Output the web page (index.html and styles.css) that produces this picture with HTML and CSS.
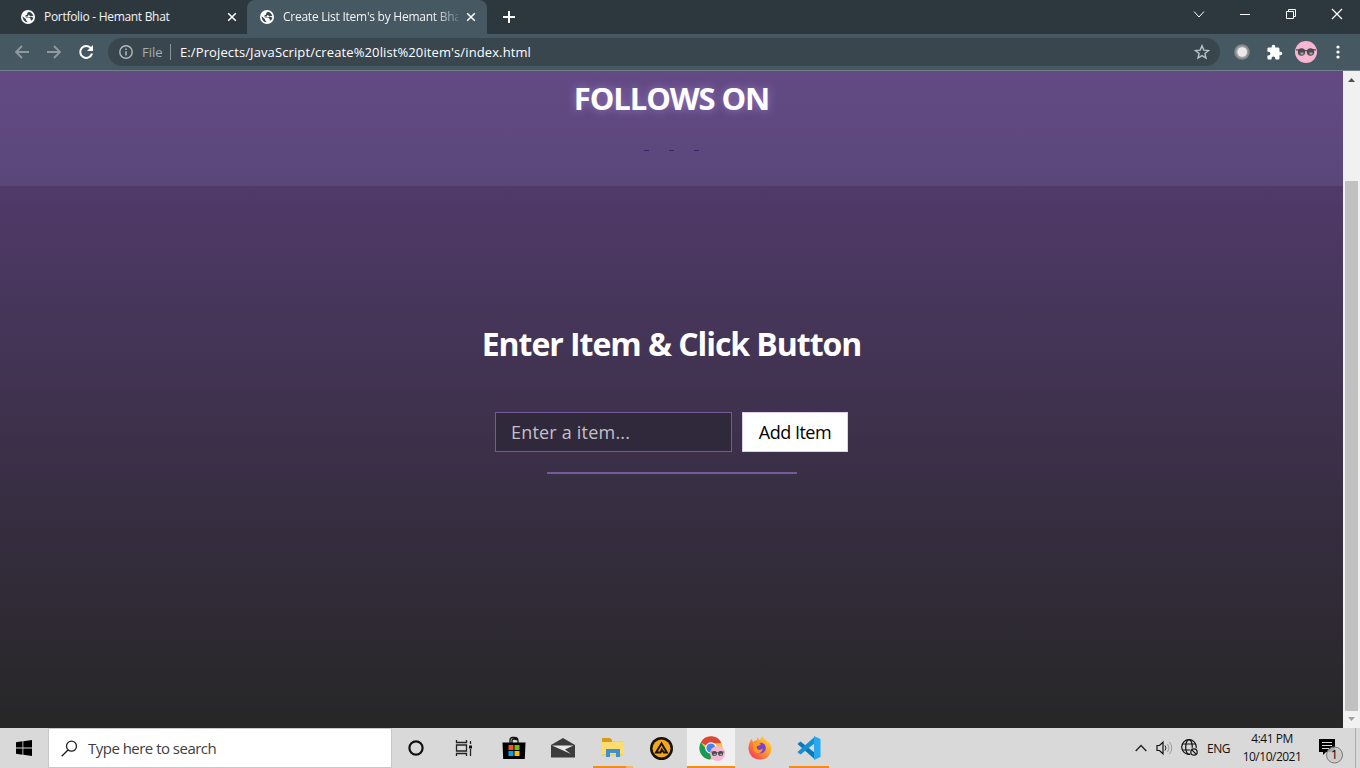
FILE: index.html
```html
<!DOCTYPE html>
<html lang="en">
<head>
<meta charset="utf-8">
<title>Create List Item's by Hemant Bhat</title>
<link rel="stylesheet" href="styles.css">
</head>
<body>
<svg width="0" height="0" class="defs">
  <symbol id="globe" viewBox="0 0 14 14"><circle cx="7" cy="7" r="7" fill="#fff"/><path d="M7.500 1.600 6 3.200v1.600H4.400v1.800h3.200l1.500 1.700h2.900c-.5 1.800-1.800 3.200-3.500 3.800L7.600 11.500V9.800H5.800L1.700 6.300A5.400 5.400 0 0 0 5.700 12.300V10.800L4.500 9.300M9.300 2.100v1.400L8.200 4.700l1.200 1.200h2.600" fill="none" stroke="#35444c" stroke-width="0"/><path d="M1.700 6.200 5 9.300v1l1.300 1.200v.8A5.300 5.300 0 0 1 1.700 6.200ZM7.800 1.700A5.400 5.400 0 0 1 12.200 6L9.300 6.300 8.200 5.200H7v1.300H5v1.200h3.800l.9 1.200v1.400l1 .3A5.500 5.500 0 0 0 12.300 7.500L9.700 6.800 8 7.200H4.600L4.400 5.500 6.200 4.600V3.200Z" fill="#35444c"/></symbol>
  <symbol id="close" viewBox="0 0 10 10"><path d="m1.200 1.200 7.600 7.600m0-7.600L1.200 8.800" stroke="#fff" stroke-width="1.500"/></symbol>
  <symbol id="avatar" viewBox="0 0 22 22"><circle cx="11" cy="11" r="11" fill="#f7b7d2"/><path d="M1 9q4.500-1.300 10 .8 5.500-2.100 10-.8" fill="none" stroke="#3a3036" stroke-width="1"/><circle cx="6.500" cy="11" r="3.700" fill="#4b4c50"/><circle cx="15.500" cy="11" r="3.700" fill="#4b4c50"/><path d="M5.500 12.500h3m6 0h3" stroke="#a9aaad" stroke-width="2"/></symbol>
</svg>
<div class="screen">
  <header class="tabs">
    <div class="tab">
      <svg class="favicon"><use href="#globe"/></svg>
      <span class="tab-title t1">Portfolio - Hemant Bhat</span>
      <svg class="tab-close"><use href="#close"/></svg>
    </div>
    <div class="tab active">
      <svg class="favicon"><use href="#globe"/></svg>
      <span class="tab-title t2">Create List Item's by Hemant Bha</span>
      <svg class="tab-close"><use href="#close"/></svg>
    </div>
    <svg class="new-tab" viewBox="0 0 12 12"><path d="M6 0v12M0 6h12" stroke="#fff" stroke-width="2"/></svg>
    <div class="window-controls">
      <svg width="46" height="28" viewBox="0 0 46 28"><path d="m18 11.500 5 5.500 5-5.500"/></svg>
      <svg width="46" height="28" viewBox="0 0 46 28"><path d="M18 14.500h10"/></svg>
      <svg width="46" height="28" viewBox="0 0 46 28"><path d="M18.500 11.500h7v7h-7zM20.500 11.500v-2h7v7h-2"/></svg>
      <svg width="46" height="28" viewBox="0 0 46 28"><path d="m18 9 10 10m0-10L18 19" stroke-width="1.300"/></svg>
    </div>
  </header>

  <nav class="toolbar">
    <svg class="nav-icon" viewBox="0 0 16 16"><path d="M15 8H2m6-6L2 8l6 6" fill="none" stroke="#8e9aa0" stroke-width="1.800"/></svg>
    <svg class="nav-icon" viewBox="0 0 16 16"><path d="M1 8h13M8 2l6 6-6 6" fill="none" stroke="#8e9aa0" stroke-width="1.800"/></svg>
    <svg class="nav-icon" viewBox="0 0 16 16"><path d="M13 4.300A6 6 0 1 0 14 9.500" fill="none" stroke="#fff" stroke-width="2"/><path d="M15 1v6H9Z" fill="#fff"/></svg>
    <div class="address">
      <svg width="14" height="14" viewBox="0 0 14 14"><circle cx="7" cy="7" r="6.200" fill="none" stroke="#b1babe" stroke-width="1.400"/><path d="M7 6.200v4.300M7 3.500V5" stroke="#b1babe" stroke-width="1.500"/></svg>
      <span class="scheme">File</span>
      <span class="divider"></span>
      <span class="url">E:/Projects/JavaScript/create%20list%20item's/index.html</span>
      <svg class="star" viewBox="0 0 16 16"><path d="m8 1.800 1.800 4.300 4.700.4-3.600 3 1.100 4.600-4-2.500-4 2.500 1.100-4.600-3.600-3 4.700-.4Z" fill="none" stroke="#bac3c7" stroke-width="1.400"/></svg>
    </div>
    <svg class="ext" viewBox="0 0 16 16"><circle cx="8" cy="8" r="7.800" fill="#858889"/><circle cx="8" cy="8" r="6" fill="#a8a8a8"/><circle cx="8.200" cy="8" r="4.800" fill="#e9e9e9"/></svg>
    <svg class="puzzle" viewBox="0 0 24 24"><path fill="#fff" d="M20.500 11H19V7c0-1.100-.9-2-2-2h-4V3.500a2.500 2.500 0 0 0-5 0V5H4c-1.100 0-2 .9-2 2v3.800h1.500a2.700 2.700 0 0 1 0 5.400H2V20c0 1.100.9 2 2 2h3.800v-1.500a2.700 2.700 0 0 1 5.400 0V22H17c1.100 0 2-.9 2-2v-4h1.500a2.500 2.500 0 0 0 0-5z"/></svg>
    <svg class="avatar"><use href="#avatar"/></svg>
    <svg class="menu" viewBox="0 0 4 14"><g fill="#fff"><circle cx="2" cy="2" r="1.600"/><circle cx="2" cy="7" r="1.600"/><circle cx="2" cy="12" r="1.600"/></g></svg>
  </nav>

  <div class="viewport">
    <main class="page">
      <section class="follow">
        <h2>FOLLOWS ON</h2>
        <div class="links"><i></i><i></i><i></i></div>
      </section>
      <section class="list-app">
        <h1>Enter Item &amp; Click Button</h1>
        <div class="form">
          <div class="field"><span>Enter a item...</span></div>
          <button class="add"><span>Add Item</span></button>
        </div>
        <div class="rule"></div>
      </section>
    </main>
    <div class="scrollbar">
      <svg width="17" height="17" viewBox="0 0 17 17"><path d="M5 11h7L8.500 7Z" fill="#505050"/></svg>
      <div class="thumb"></div>
      <svg width="17" height="17" viewBox="0 0 17 17"><path d="M5 6h7l-3.500 4Z" fill="#a3a3a3"/></svg>
    </div>
  </div>

  <footer class="taskbar">
    <div class="start"><svg width="16" height="16" viewBox="0 0 16 16"><path d="M0 2.200 6.500 1.300v6.200H0ZM7.300 1.200 16 0v7.500H7.300ZM0 8.400h6.500v6.300L0 13.800ZM7.300 8.400H16V16l-8.700-1.200Z"/></svg></div>
    <div class="search">
      <svg width="17" height="17" viewBox="0 0 17 17"><circle cx="10.500" cy="6.200" r="5" fill="none" stroke="#222" stroke-width="1.300"/><path d="m7 10-6.300 6.300" stroke="#222" stroke-width="1.400"/></svg>
      <span>Type here to search</span>
    </div>
    <div class="apps">
      <div class="app"><svg width="16" height="16" viewBox="0 0 16 16"><circle cx="8" cy="8" r="6.600" fill="none" stroke="#111" stroke-width="2.200"/></svg></div>
      <div class="app"><svg width="18" height="16" viewBox="0 0 18 16"><path d="M1.500 0v2.500h10V0M1.500 16v-2.500h10V16M1.500 5h10v6h-10zM15.500 1v3m0 5v7" fill="none" stroke="#222" stroke-width="1.300"/><path d="M14 5.500h3v3h-3z" fill="#111"/></svg></div>
      <div class="app wide store"><svg width="24" height="24" viewBox="0 0 24 24"><path d="M8 7V4q0-2.500 2.500-2.500h2Q16 1.500 16 5v2M10 7V5q0-2 2-2t3 1" fill="none" stroke="#111" stroke-width="1.300"/><path d="M.5 6.500h23L22.800 23H1.200Z"/><path d="M6.500 9h5v5h-5z" fill="#f25022"/><path d="M12.500 9h5v5h-5z" fill="#7fba00"/><path d="M6.500 15h5v5h-5z" fill="#00a4ef"/><path d="M12.500 15h5v5h-5z" fill="#ffb900"/></svg></div>
      <div class="app wide"><svg width="24" height="20" viewBox="0 0 24 20"><path d="M0 7 12 0l12 7v12.500H0Z" fill="#3c3c3c"/><path d="M1 7.500h21.500l-8.500 4 6 4.500Z" fill="#e8e8e8"/></svg></div>
      <div class="app wide explorer"><svg width="24" height="22" viewBox="0 0 24 22"><path d="M1 2h8l2 2h11v15H1Z" fill="#f9cf59"/><path d="M1 1h8l2 2v2H1Z" fill="#d69b18"/><path d="M1 5h21v12H1Z" fill="#ffdc70"/><path d="M5 12h14v8h-4v-4H9v4H5Z" fill="#3c92cf"/></svg></div>
      <div class="app wide"><svg width="23" height="23" viewBox="0 0 23 23"><circle cx="11.500" cy="11.500" r="11.500" fill="#17130a"/><circle cx="11.500" cy="11.500" r="9" fill="#f5a61c"/><path d="M11.500 6.500 6 15.500h4.500l1.300-3 2 3h3Z" fill="none" stroke="#17130a" stroke-width="2"/></svg></div>
      <div class="app wide chrome"><svg width="27" height="27" viewBox="0 0 27 27"><circle cx="12" cy="12" r="11.500" fill="#f7c633"/><path d="M12 12 1.800 6.500A11.500 11.500 0 0 1 22.500 7.200H12Z" fill="#db4739"/><path d="M1.800 6.500A11.500 11.500 0 0 0 11 23.500l5-9-8-.5Z" fill="#199956"/><circle cx="12" cy="12" r="5.800" fill="#fff"/><circle cx="12" cy="12" r="4.600" fill="#4484ef"/><use href="#avatar" x="11" y="10" width="15" height="15"/></svg></div>
      <div class="app wide"><svg width="24" height="24" viewBox="0 0 24 24"><defs><linearGradient id="fire" x1="1" y1="0" x2="0" y2="1"><stop stop-color="#ffe650"/><stop offset=".45" stop-color="#ff9b28"/><stop offset="1" stop-color="#f52768"/></linearGradient></defs><path d="M3.500 3 5 6q2-2 4-2V1.500L12 4l2.500-4q1 3 4 4.500Q24 8 23.500 13.500 22 23.500 12 23.500 1.500 23 .5 13 .5 7 3.500 3Z" fill="url(#fire)"/><circle cx="12.500" cy="12" r="5.300" fill="#7643d2"/><path d="M5 7q5-2 8 1-1 2-4 2-1 3 2 4 3 0 4-2-1 6-6 5-5-2-4-10Z" fill="#ff9a26"/></svg></div>
      <div class="app wide code"><svg width="24" height="24" viewBox="0 0 24 24"><path d="m1.500 7 2-1.500L18 17v6.500L.5 8Z" fill="#0879bd"/><path d="m1.500 17 2 1.500L18 7V.5L.5 16Z" fill="#168ed0"/><path d="m17 0 6.500 3v18L17 24Z" fill="#28a9ed"/></svg></div>
    </div>
    <div class="tray">
      <svg class="up" viewBox="0 0 12 8"><path d="m.7 7 5.300-5.500L11.300 7" fill="none" stroke="#222" stroke-width="1.300"/></svg>
      <svg class="sound" viewBox="0 0 17 16"><path d="M1 5.500h2.500L7 2.200v11.600L3.500 10.500H1Z" fill="none" stroke="#111" stroke-width="1.200"/><path d="M9 5.500q2 2.500 0 5" fill="none" stroke="#222"/><path d="M11.500 4q3 4 0 8m2-10q4.500 6 0 12" fill="none" stroke="#999"/></svg>
      <svg class="net" viewBox="0 0 18 18"><g fill="none" stroke="#111" stroke-width="1.200"><circle cx="8" cy="8" r="7.300"/><ellipse cx="8" cy="8" rx="3.300" ry="7.300"/><path d="M1.500 5h13M1.500 11h10"/></g><circle cx="13" cy="13" r="4.500" fill="#d9d9d9"/><circle cx="13" cy="13" r="3.200" fill="none" stroke="#111" stroke-width="1.200"/><path d="m10.800 10.800 4.500 4.500" stroke="#111" stroke-width="1.200"/></svg>
      <span class="lang">ENG</span>
      <div class="clock"><span class="time">4:41 PM</span><span class="date">10/10/2021</span></div>
      <svg class="notes" viewBox="0 0 26 26"><path d="M1 1h16v13H8l-3 3v-3H1Z"/><path d="M4 4.500h10M4 7.500h10M4 10.500h7" stroke="#d9d9d9" stroke-width="1.100"/><circle cx="16.500" cy="17" r="8" fill="#c9c9c9" fill-opacity=".85" stroke="#777"/><text x="16.500" y="21" text-anchor="middle" class="count">1</text></svg>
    </div>
  </footer>
</div>
</body>
</html>
```
FILE: styles.css
```css
* { box-sizing: border-box; }
body { margin: 0; overflow: hidden; font-family: "Open Sans", "Noto Sans", sans-serif; }
svg { display: block; flex: none; }
.defs { position: absolute; }
.screen { width: 1360px; height: 768px; display: flex; flex-direction: column; }
span { white-space: nowrap; }

.tabs { height: 34px; flex: none; display: flex; background: #2d383e; }
.tab { width: 247px; height: 34px; display: flex; align-items: center; padding-left: 21px; color: #f2f4f5; }
.tab.active { width: 240px; padding-left: 13px; background: #465861; border-radius: 8px 8px 0 0; }
.favicon { width: 14px; height: 14px; }
.tab-title { width: 175px; margin-left: 9px; font-size: 12px; line-height: 34px; }
.t1 { letter-spacing: -.3px; }
.t2 { letter-spacing: -.25px; -webkit-mask-image: linear-gradient(90deg, #000 150px, transparent 182px); }
.tab-close { width: 10px; height: 10px; margin-left: 8px; }
.new-tab { width: 12px; height: 12px; margin: 11px 0 0 16px; }
.window-controls { display: flex; margin-left: auto; }
.window-controls path { fill: none; stroke: #fff; }

.toolbar { height: 37px; flex: none; display: flex; align-items: center; padding-left: 14px; background: #465861; border-bottom: 1px solid #718089; }
.nav-icon { width: 16px; height: 16px; margin-right: 16px; }
.address { width: 1112px; height: 28px; margin-left: -2px; display: flex; align-items: center; padding: 0 10px 0 11px; background: #39464d; border-radius: 14px; }
.scheme { width: 28px; margin-left: 9px; color: #a5afb4; font-size: 13px; }
.divider { width: 1px; height: 16px; background: #87939a; }
.url { margin-left: 9px; color: #fff; font-size: 13px; letter-spacing: .11px; }
.star { width: 16px; height: 16px; margin-left: auto; }
.ext { width: 16px; height: 16px; margin-left: 14px; }
.puzzle { width: 17px; height: 17px; margin-left: 16px; }
.avatar { width: 22px; height: 22px; margin-left: 12px; }
.menu { width: 4px; height: 14px; margin-left: 19px; }

.viewport { height: 657px; flex: none; display: flex; }
.page { width: 1343px; background: linear-gradient(#573f79, #503a69 115px, #262626 657px); text-align: center; color: #fff; }
.follow { height: 115px; padding-top: 7px; background: linear-gradient(#634a84, #5a4779); }
h1, h2 { margin: 0; font-size: 32px; font-weight: 700; line-height: 40px; letter-spacing: -1.05px; }
h2 { font-size: 31px; letter-spacing: -1.1px; text-shadow: 0 0 10px #9a7bc5; }
.links { display: flex; justify-content: center; gap: 20px; padding-top: 32px; }
.links i { width: 5px; height: 1px; background: #3b236c; }
.list-app { padding-top: 138px; }
.form { display: flex; justify-content: center; gap: 10px; padding-top: 48px; font-size: 18px; }
.field { width: 237px; height: 40px; padding-left: 15px; border: 1px solid #745a99; background: #30283b; color: #c3c0c7; text-align: left; font-weight: 500; line-height: 39px; letter-spacing: .2px; }
.add { width: 106px; height: 40px; padding: 0; border: 1px solid #dfcdf3; background: #fff; color: #000; font: 500 18px/38px "Open Sans", sans-serif; letter-spacing: -.5px; }
.rule { width: 250px; height: 2px; margin: 20px auto 0; background: #745a99; }

.scrollbar { width: 17px; display: flex; flex-direction: column; align-items: center; background: #f1f1f1; }
.thumb { width: 13px; height: 530px; margin: 93px 0 0; background: #c1c1c1; }

.taskbar { height: 40px; flex: none; display: flex; background: #d9d9d9; color: #111; }
.start { width: 48px; display: flex; align-items: center; justify-content: center; }
.search { width: 344px; display: flex; align-items: center; padding-left: 12px; border: 1px solid #c8c8c8; background: #fff; color: #404040; font-size: 15px; }
.search span { margin-left: 10px; letter-spacing: -.52px; }
.apps { display: flex; }
.app { width: 48px; height: 40px; display: flex; align-items: center; justify-content: center; }
.wide { width: 49px; }
.store { margin-left: 1px; }
.explorer { margin-left: 1px; background: linear-gradient(90deg, #f28c1e 33px, #f3b86d 33px) 5px 38px / 40px 2px no-repeat; }
.chrome { width: 48px; margin-left: 1px; padding: 2px 0 0 3px; background: linear-gradient(#f28c1e, #f28c1e) 0 38px / 48px 2px no-repeat #f0f0f0; }
.code { background: linear-gradient(#f28c1e, #f28c1e) 5px 38px / 40px 2px no-repeat; }
.tray { width: 221px; margin-left: auto; margin-right: 4px; border-right: 1px solid #aaa; display: flex; align-items: center; }
.up { width: 12px; height: 8px; }
.sound { width: 17px; height: 16px; margin-left: 9px; }
.net { width: 18px; height: 18px; margin-left: 8px; }
.lang { width: 24px; margin-left: 8px; font-size: 12px; letter-spacing: -.5px; }
.clock { width: 60px; margin-left: 11px; display: flex; flex-direction: column; align-items: center; font-size: 12px; line-height: 18px; }
.time, .date { letter-spacing: -.5px; }
.notes { width: 26px; height: 26px; margin: 6px 0 0 16px; }
.count { font-size: 12px; }
```
